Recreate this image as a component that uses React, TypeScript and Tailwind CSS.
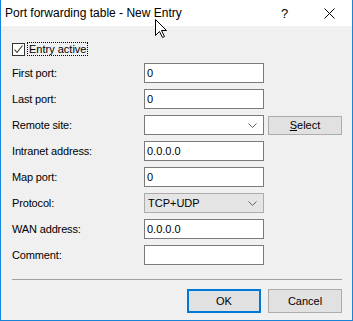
import React from "react";

const Chevron = () => (
  <svg width="9" height="5" viewBox="0 0 9 5" className="shrink-0">
    <path d="M0.5 0.5 L4.5 4.5 L8.5 0.5" fill="none" stroke="#606060" strokeWidth="1" />
  </svg>
);

const TextBox = ({ value = "" }: { value?: string }) => (
  <div className="h-[20px] w-[120px] border border-[#7a7a7a] bg-white flex items-center pl-[2px] text-[11px] text-black leading-none">
    {value}
  </div>
);

const Label = ({ children }: { children: React.ReactNode }) => (
  <div className="h-[20px] flex items-center text-[11px] text-black leading-none tracking-[-0.15px]">{children}</div>
);

export default function App() {
  return (
    <div
      className="relative w-[353px] h-[321px] flex flex-col bg-[#f0f0f0] border-x border-b border-[#1883d7] overflow-hidden"
      style={{ fontFamily: '"Liberation Sans", Arial, sans-serif' }}
    >
      {/* Title bar */}
      <div className="h-[26px] bg-white flex items-center shrink-0">
        <div className="pl-[4px] text-[12px] text-black flex-1 leading-none">Port forwarding table - New Entry</div>
        <div className="w-[46px] flex justify-center text-[13px] text-black leading-none pl-[3px]">?</div>
        <div className="w-[46px] flex justify-center items-center">
          <svg width="11" height="11" viewBox="0 0 11 11">
            <path d="M0.5 0.5 L10.5 10.5 M10.5 0.5 L0.5 10.5" stroke="#000" strokeWidth="1" />
          </svg>
        </div>
      </div>

      {/* Body */}
      <div className="flex-1 flex flex-col pl-[11px] pr-[10px] pt-[16px]">
        <div className="flex items-center h-[14px]">
          <div className="w-[13px] h-[13px] border border-[#333] bg-white flex items-center justify-center">
            <svg width="11" height="11" viewBox="0 0 11 11">
              <path d="M1.5 5.5 L4 8.5 L9.5 1.5" fill="none" stroke="#333" strokeWidth="1.1" />
            </svg>
          </div>
          <div className="ml-[2px] h-[14px] px-[1px] flex items-center border border-dotted border-black text-[11px] text-black leading-none">
            Entry active
          </div>
        </div>

        <div className="mt-[7px] grid grid-cols-[132px_120px_1fr] gap-y-[6px] items-center">
          <Label>First port:</Label>
          <TextBox value="0" />
          <div />

          <Label>Last port:</Label>
          <TextBox value="0" />
          <div />

          <Label>Remote site:</Label>
          <div className="h-[20px] w-[120px] border border-[#7a7a7a] bg-white flex items-center justify-end pr-[6px]">
            <Chevron />
          </div>
          <div className="pl-[4px]">
            <div className="h-[19px] w-[74px] mt-[1px] border border-[#adadad] bg-[#e1e1e1] flex items-center justify-center text-[11px] text-black leading-none">
              <span className="underline underline-offset-1">S</span>elect
            </div>
          </div>

          <Label>Intranet address:</Label>
          <TextBox value="0.0.0.0" />
          <div />

          <Label>Map port:</Label>
          <TextBox value="0" />
          <div />

          <Label>Protocol:</Label>
          <div className="h-[20px] w-[120px] border border-[#acacac] bg-[#e5e5e5] flex items-center justify-between pl-[3px] pr-[6px] text-[11px] text-black leading-none">
            <span>TCP+UDP</span>
            <Chevron />
          </div>
          <div />

          <Label>WAN address:</Label>
          <TextBox value="0.0.0.0" />
          <div />

          <Label>Comment:</Label>
          <TextBox />
          <div />
        </div>

        <div className="mt-[14px] h-px bg-[#a0a0a0]" />

        <div className="mt-[9px] flex justify-end gap-[7px]">
          <div className="h-[24px] w-[74px] border-2 border-[#0078d7] bg-[#e1e1e1] flex items-center justify-center text-[11px] text-black leading-none">
            OK
          </div>
          <div className="h-[24px] w-[74px] border border-[#adadad] bg-[#e1e1e1] flex items-center justify-center text-[11px] text-black leading-none">
            Cancel
          </div>
        </div>
      </div>

      {/* Mouse cursor */}
      <svg className="absolute left-[154px] top-[19px]" width="13" height="20" viewBox="0 0 13 20">
        <path d="M0.5 0.5 L0.5 16.5 L4.5 12.5 L7.5 18.5 L9.5 17.5 L6.5 11.5 L11.5 11.5 Z" fill="#fff" stroke="#000" strokeWidth="1" strokeLinejoin="round" />
      </svg>
    </div>
  );
}
